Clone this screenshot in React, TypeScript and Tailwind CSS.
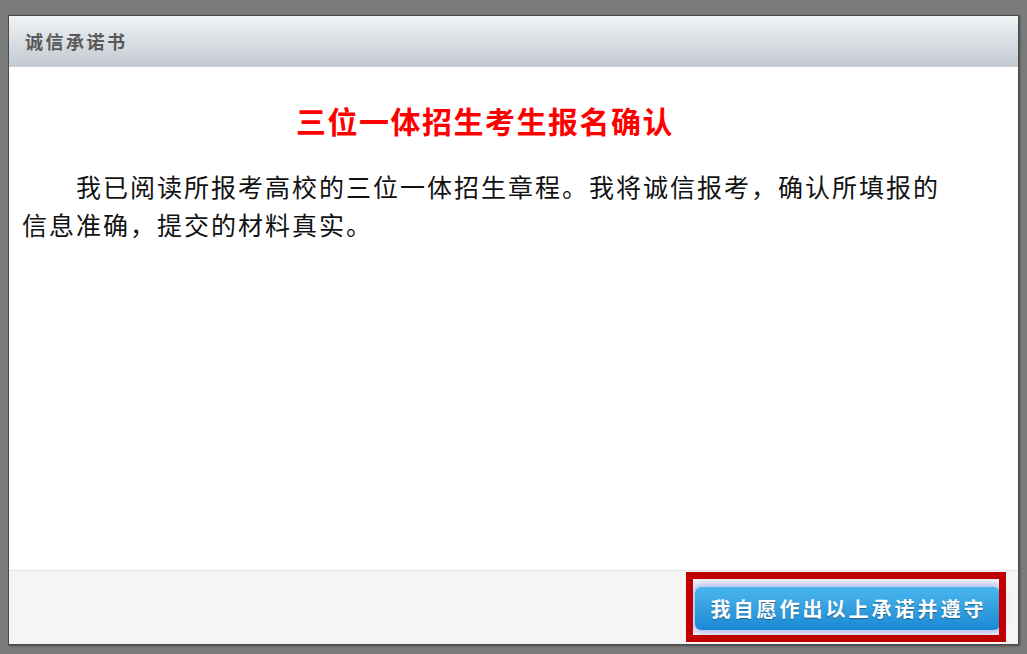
import React from "react";

export default function App() {
  const font = { fontFamily: '"Noto Sans CJK SC", "Noto Sans", sans-serif' };
  return (
    <div
      className="w-[1027px] h-[654px] bg-[#7b7b7b] pt-[15px] pl-[8px] overflow-hidden"
      style={font}
    >
      <div className="w-[1011px] h-[630px] border border-[#4a4a4a] flex flex-col bg-white shadow-[1px_1px_2px_rgba(0,0,0,0.4)]">
        <div className="h-[51px] shrink-0 bg-gradient-to-b from-[#f0f4f6] to-[#c4cad2] border-b border-[#c9cdd3] flex items-center pl-[16px]">
          <span className="text-[18px] font-bold text-[#595959] tracking-[2.5px] leading-none">
            诚信承诺书
          </span>
        </div>
        <div className="flex-1 bg-white pt-[33px] pl-[13px] pr-[66px]">
          <h1 className="text-[30px] leading-[40px] font-bold text-[#ff0000] tracking-[1.5px] pl-[274px]">
            三位一体招生考生报名确认
          </h1>
          <p className="mt-[27px] text-[25px] leading-[38px] text-[#111] tracking-[2px] indent-[54px]">
            我已阅读所报考高校的三位一体招生章程。我将诚信报考，确认所填报的信息准确，提交的材料真实。
          </p>
        </div>
        <div className="h-[74px] shrink-0 bg-[#f5f5f5] border-t border-[#e4e4e4] flex items-start justify-end pt-[16px] pr-[18px]">
          <div className="relative">
            <button className="w-[305px] h-[43px] rounded-[6px] bg-gradient-to-b from-[#4ab6ef] to-[#1889d2] text-white text-[20px] font-bold tracking-[3px] pl-[2px] shadow-[0_0_7px_3px_rgba(150,160,235,0.7)] [text-shadow:0_1px_1px_rgba(0,0,0,0.35)] flex items-center justify-center">
              我自愿作出以上承诺并遵守
            </button>
            <div className="absolute left-[-9px] top-[-15px] w-[320px] h-[70px] border-[7px] border-[#c00000] pointer-events-none" />
          </div>
        </div>
      </div>
    </div>
  );
}
